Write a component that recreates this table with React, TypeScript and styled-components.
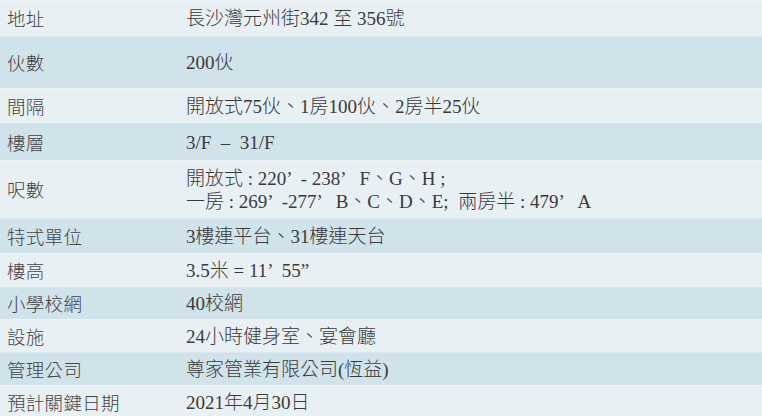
import styled, { createGlobalStyle } from "styled-components";

const GlobalStyle = createGlobalStyle`
   html, body {
      margin: 0;
      padding: 0;
      background: #e9f0f4;
   }
`;

type RowData = {
   label: string;
   value: string[];
   height: number;
};

const rows: RowData[] = [
   { label: "地址", value: ["長沙灣元州街342 至 356號"], height: 36 },
   { label: "伙數", value: ["200伙"], height: 52 },
   { label: "間隔", value: ["開放式75伙、1房100伙、2房半25伙"], height: 35 },
   { label: "樓層", value: ["3/F  –  31/F"], height: 37 },
   {
      label: "呎數",
      value: [
         "開放式 : 220’  - 238’   F、G、H ;",
         "一房 : 269’  -277’   B、C、D、E;  兩房半 : 479’   A",
      ],
      height: 58,
   },
   { label: "特式單位", value: ["3樓連平台、31樓連天台"], height: 35 },
   { label: "樓高", value: ["3.5米 = 11’  55”"], height: 34 },
   { label: "小學校網", value: ["40校網"], height: 32 },
   { label: "設施", value: ["24小時健身室、宴會廳"], height: 33 },
   { label: "管理公司", value: ["尊家管業有限公司(恆益)"], height: 33 },
   { label: "預計關鍵日期", value: ["2021年4月30日"], height: 33 },
];

function App() {
   return (
      <>
         <GlobalStyle />
         <Table>
            {rows.map((row, i) => (
               <Row key={row.label} $shaded={i % 2 === 1} $height={row.height}>
                  <Label>{row.label}</Label>
                  <Value>
                     {row.value.map((line) => (
                        <Line key={line}>{line}</Line>
                     ))}
                  </Value>
               </Row>
            ))}
         </Table>
      </>
   );
}

export default App;

const Table = styled.div`
   width: 762px;
   height: 416px;
   overflow: hidden;
   display: flex;
   flex-direction: column;
   color: #3b3b3b;
`;

const Row = styled.div<{ $shaded: boolean; $height: number }>`
   display: grid;
   grid-template-columns: 179px 1fr;
   align-items: center;
   flex: 0 0 ${(p) => p.$height}px;
   box-sizing: border-box;
   padding-left: 7px;
   background: ${(p) => (p.$shaded ? "#d0e2ea" : "#e9f0f4")};
   border-top: 1px solid ${(p) => (p.$shaded ? "#d9e8ee" : "#eff4f7")};
`;

const Label = styled.div`
   font-family: "Noto Sans CJK TC", sans-serif;
   font-size: 18.5px;
   font-weight: 300;
   letter-spacing: 0.3px;
   line-height: 1;
   color: #444;
`;

const Value = styled.div`
   display: flex;
   flex-direction: column;
   font-family: "Liberation Serif", "Noto Sans CJK TC", serif;
   font-size: 19px;
   font-weight: 300;
   line-height: 23px;
   color: #3a3a3a;
`;

const Line = styled.div`
   white-space: pre;
`;
